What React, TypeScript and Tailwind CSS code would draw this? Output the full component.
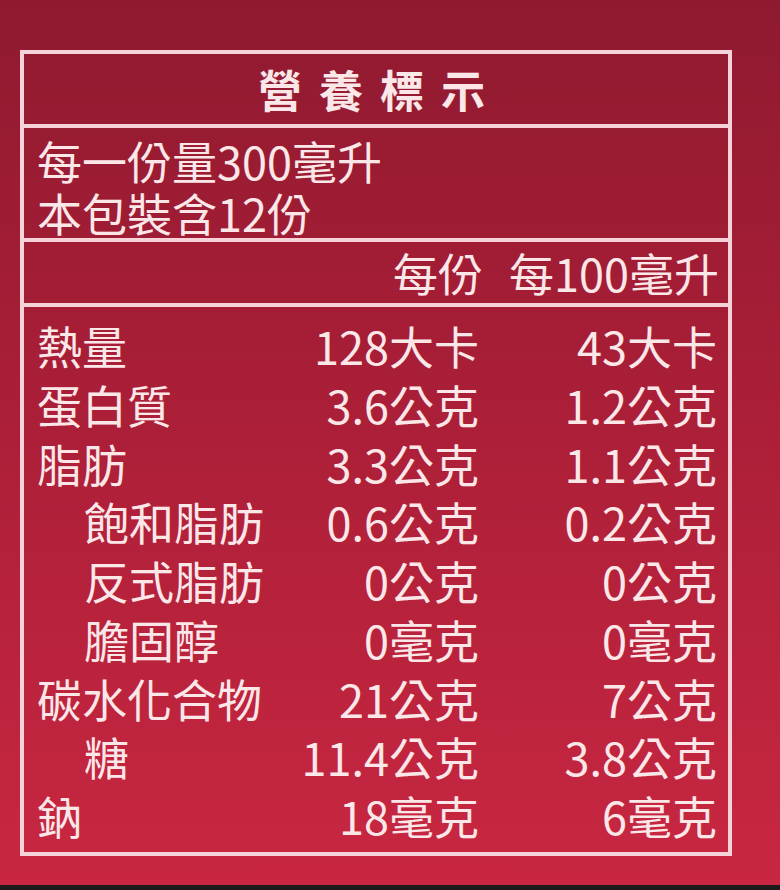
const rows: { label: string; indent?: boolean; perServing: string; per100: string }[] = [
  { label: "熱量", perServing: "128大卡", per100: "43大卡" },
  { label: "蛋白質", perServing: "3.6公克", per100: "1.2公克" },
  { label: "脂肪", perServing: "3.3公克", per100: "1.1公克" },
  { label: "飽和脂肪", indent: true, perServing: "0.6公克", per100: "0.2公克" },
  { label: "反式脂肪", indent: true, perServing: "0公克", per100: "0公克" },
  { label: "膽固醇", indent: true, perServing: "0毫克", per100: "0毫克" },
  { label: "碳水化合物", perServing: "21公克", per100: "7公克" },
  { label: "糖", indent: true, perServing: "11.4公克", per100: "3.8公克" },
  { label: "鈉", perServing: "18毫克", per100: "6毫克" },
];

export default function App() {
  return (
    <div
      className="w-[780px] h-[890px] overflow-hidden flex flex-col bg-gradient-to-b from-[#8f1a30] via-[#ad1f38] to-[#c92741] text-[#fbe6e8]"
      style={{ fontFamily: '"Noto Sans CJK TC", "Noto Sans", sans-serif' }}
    >
      <div className="pt-[50px] pl-[20px] pr-[48px]">
        <div className="border-4 border-[#f6d3d8] flex flex-col">
          {/* title */}
          <div className="h-[74px] flex items-center justify-center border-b-4 border-[#f6d3d8]">
            <h1 className="text-[44px] leading-none font-bold tracking-[17px] pl-[8px]">營養標示</h1>
          </div>

          {/* serving */}
          <div className="h-[114px] border-b-4 border-[#f6d3d8] pl-[13px] pt-[7px] text-[45px] leading-[52px]">
            <div className="h-[52px]">每一份量300毫升</div>
            <div className="h-[52px]">本包裝含12份</div>
          </div>

          {/* column header */}
          <div className="h-[65px] border-b-4 border-[#f6d3d8] grid grid-cols-[1fr_200px_240px] items-center pr-[9px] text-[45px] leading-none">
            <div />
            <div className="text-right translate-x-[4px]">每份</div>
            <div className="text-right">每100毫升</div>
          </div>

          {/* nutrients */}
          <div className="pt-[10px] pb-[6px] pl-[13px] pr-[11px] text-[45px] leading-[58.75px]">
            {rows.map((r) => (
              <div key={r.label} className="grid grid-cols-[1fr_200px_238px]">
                <div className={r.indent ? "pl-[47px]" : ""}>{r.label}</div>
                <div className="text-right">{r.perServing}</div>
                <div className="text-right">{r.per100}</div>
              </div>
            ))}
          </div>
        </div>
      </div>
      <div className="flex-1" />
      <div className="h-[5px] bg-[#1d1a1c]" />
    </div>
  );
}
